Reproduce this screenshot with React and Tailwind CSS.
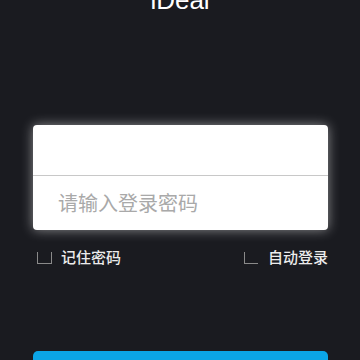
import React from "react";

function App() {
  return (
    <div
      className="w-[360px] h-[360px] overflow-hidden bg-[#1a1b20]"
      style={{ fontFamily: '"Liberation Sans", "Noto Sans CJK SC", sans-serif' }}
    >
      {/* TITLE */}
      <div className="-mt-[13px] text-center text-[26px] leading-none text-white">
        iDeal
      </div>

      {/* INPUTS */}
      <div className="ml-[33px] mr-[32px] mt-[112px] rounded-[4px] bg-white shadow-[0_0_12px_rgba(255,255,255,0.5)]">
        <div className="h-[51px] border-b border-[#c8c8c8]"></div>
        <div className="h-[54px] flex items-center pl-[25px] pt-[2px] text-[20px] text-[#a9a9a9]">
          请输入登录密码
        </div>
      </div>

      {/* OPTIONS */}
      <div className="ml-[37px] mr-[32px] mt-[17px] flex items-center justify-between text-[15px] font-medium text-[#ececec]">
        <div className="flex items-center gap-[9px]">
          <span className="block w-[15px] h-[12px] border-l border-b border-r border-[#8a8a8a]"></span>
          <span>记住密码</span>
        </div>
        <div className="flex items-center gap-[10px]">
          <span className="block w-[14px] h-[12px] border-l border-b border-[#8a8a8a]"></span>
          <span>自动登录</span>
        </div>
      </div>

      {/* BUTTON */}
      <div className="ml-[33px] mr-[32px] mt-[81px] h-[44px] rounded-[5px] bg-[#0ba5e6]"></div>
    </div>
  );
}

export default App;
